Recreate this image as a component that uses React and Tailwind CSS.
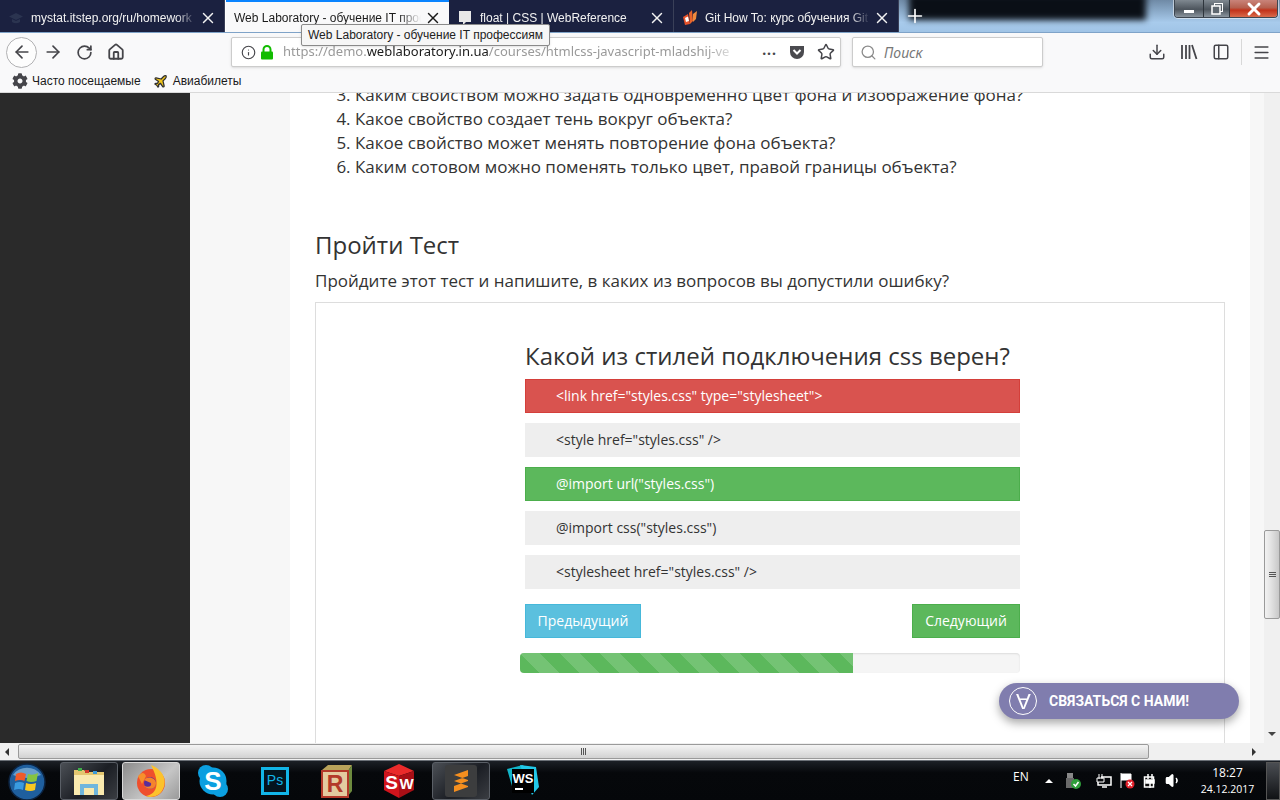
import React from 'react';
import {
  ArrowLeft, ArrowRight, RotateCw, Home, Info, X, Plus, Search, Download,
  PanelLeft, Menu, Star, Plane, Volume1,
} from 'lucide-react';
import { FaCog } from 'react-icons/fa';

const tabs = [
  { title: 'mystat.itstep.org/ru/homework', icon: 'cap' },
  { title: 'Web Laboratory - обучение IT профессиям', active: true },
  { title: 'float | CSS | WebReference', icon: 'bubble' },
  { title: 'Git How To: курс обучения Git', icon: 'git' },
];

const questions = [
  'Каким свойством можно задать одновременно цвет фона и изображение фона?',
  'Какое свойство создает тень вокруг объекта?',
  'Какое свойство может менять повторение фона объекта?',
  'Каким сотовом можно поменять только цвет, правой границы объекта?',
];

const answers = [
  { text: '<link href="styles.css" type="stylesheet">', cls: 'bg-[#d9534f] border-[#d43f3a] text-white' },
  { text: '<style href="styles.css" />', cls: 'bg-[#eeeeee] border-[#eeeeee] text-[#333]' },
  { text: '@import url("styles.css")', cls: 'bg-[#5cb85c] border-[#4cae4c] text-white' },
  { text: '@import css("styles.css")', cls: 'bg-[#eeeeee] border-[#eeeeee] text-[#333]' },
  { text: '<stylesheet href="styles.css" />', cls: 'bg-[#eeeeee] border-[#eeeeee] text-[#333]' },
];

const TabIcon = ({ type }) => {
  if (type === 'cap') {
    return (
      <svg width="16" height="16" viewBox="0 0 16 16" className="shrink-0">
        <path d="M8 3 L15 6.500 L8 10 L1 6.500 Z M4 9 V12 Q8 14.500 12 12 V9 L8 11 Z" fill="#2b3450" />
      </svg>
    );
  }
  if (type === 'bubble') {
    return (
      <svg width="16" height="16" viewBox="0 0 16 16" className="shrink-0">
        <path d="M2 1 H14 V12 H9 L6 15 V12 H2 Z" fill="#e8e8e8" />
      </svg>
    );
  }
  if (type === 'git') {
    return (
      <svg width="16" height="18" viewBox="0 0 16 18" className="shrink-0">
        <path d="M1 8 L6 5 L8 15 L3 16 Z" fill="#e8532b" />
        <path d="M3 9 L6 7.500 L7 12 L4 13 Z" fill="#fff" />
        <path d="M7 4 L10 1 L11 12 L8 15 Z" fill="#e8632b" />
        <path d="M11 5 L15 2 L14 10 L11 13 Z" fill="#f08a3c" />
      </svg>
    );
  }
  return null;
};

const Tab = ({ tab }) => (
  <div
    className={
      tab.active
        ? 'w-[223px] h-[32px] flex items-center pl-[8px] pr-[7px] pt-[1px] bg-[#f9f9fa] border-t-2 border-[#0a84ff] text-[#1a1a1a]'
        : 'w-[225px] h-[32px] flex items-center pl-[8px] pr-[7px] pt-[3px] bg-[#1b2140] border-r border-[#3a4058] text-[#f2f2f2]'
    }
  >
    {tab.icon && <TabIcon type={tab.icon} />}
    <span className={tab.icon ? 'ml-[7px] flex-1 overflow-hidden whitespace-nowrap text-[12px] [mask-image:linear-gradient(90deg,#000_88%,transparent)]' : 'flex-1 overflow-hidden whitespace-nowrap text-[12px] [mask-image:linear-gradient(90deg,#000_88%,transparent)]'}>
      {tab.title}
    </span>
    <X size={18} strokeWidth={1.900} className="ml-[3px] shrink-0" />
  </div>
);

const WindowControls = () => (
  <div className="absolute right-[2px] top-0 flex h-[18px] w-[104px] overflow-hidden rounded-b-[4px] border border-t-0 border-[#3d4650] shadow-[0_0_0_1px_rgba(255,255,255,0.5)]">
    <div className="flex w-[28px] items-end justify-center bg-[linear-gradient(180deg,#7f8890,#4d555d_55%,#8a949d)] pb-[4px]">
      <div className="h-[3px] w-[10px] bg-white" />
    </div>
    <div className="flex w-[27px] items-center justify-center border-x border-[#2e353c] bg-[linear-gradient(180deg,#7f8890,#4d555d_55%,#8a949d)]">
      <svg width="12" height="12" viewBox="0 0 12 12">
        <rect x="3.500" y="0.500" width="8" height="8" fill="none" stroke="#fff" />
        <rect x="1" y="3" width="8" height="8" fill="#5f6870" stroke="#fff" strokeWidth="1.500" />
      </svg>
    </div>
    <div className="flex flex-1 items-center justify-center bg-[linear-gradient(180deg,#c9847a,#b5604f_45%,#c2321a_60%,#d96a4a)]">
      <X size={20} strokeWidth={3.500} className="text-white" />
    </div>
  </div>
);

const TabBar = () => (
  <div className="flex h-[33px] border-b border-[#7fa3c8] font-['Liberation_Sans',sans-serif]">
    <div className="flex w-[226px]"><Tab tab={tabs[0]} /></div>
    <Tab tab={tabs[1]} />
    <Tab tab={tabs[2]} />
    <Tab tab={tabs[3]} />
    <div className="relative flex-1 overflow-hidden bg-[linear-gradient(180deg,#6f8aa6,#a8cbec_70%,#a0c4e6)]">
      <div className="absolute -top-[6px] left-[10px] right-[134px] h-[26px] bg-[#0a0f16] blur-[3px]" />
      <Plus size={22} strokeWidth={1.800} className="absolute left-[5px] top-[5px] text-white" />
      <WindowControls />
    </div>
  </div>
);

const NavBar = () => (
  <div className="flex h-[37px] items-center bg-[#f9f9fa] pl-[6px] pt-[1px] text-[#45454a]">
    <div className="flex h-[31px] w-[31px] items-center justify-center rounded-full border border-[#b1b1b3] bg-[#fdfdfd]">
      <ArrowLeft size={20} strokeWidth={2} />
    </div>
    <ArrowRight size={20} strokeWidth={2} className="ml-[6px]" />
    <RotateCw size={17} strokeWidth={2.400} className="ml-[13px]" />
    <Home size={18} strokeWidth={2.400} className="ml-[14px]" />

    <div className="ml-[106px] flex h-[30px] w-[610px] items-center rounded-[2px] border border-[#ccc] bg-white pl-[9px] pr-[5px] shadow-sm">
      <Info size={15} strokeWidth={1.800} />
      <svg width="14" height="15" viewBox="0 0 14 15" className="ml-[4px] shrink-0">
        <rect x="1" y="6.500" width="12" height="8" rx="1" fill="#12bc00" />
        <path d="M3.500 7 V4.500 A3.500 3.500 0 0 1 10.500 4.500 V7" fill="none" stroke="#12bc00" strokeWidth="2" />
      </svg>
      <div className="ml-[9px] w-[209px] flex-1 overflow-hidden whitespace-nowrap text-[13px] text-[#9a9a9a] [mask-image:linear-gradient(90deg,#000_92%,transparent)]">
        https://demo.<span className="text-[#1a1a1a]">weblaboratory.in.ua</span>/courses/htmlcss-javascript-mladshij-ve
      </div>
      <span className="mb-[6px] ml-[20px] text-[14px] font-bold tracking-[1px]">...</span>
      <svg width="16" height="16" viewBox="0 0 16 16" className="ml-[12px]">
        <path d="M1 2 H15 V8 A7 7 0 0 1 1 8 Z" fill="#4a4a4f" />
        <path d="M4.500 6 L8 9.500 L11.500 6" fill="none" stroke="#fff" strokeWidth="2" />
      </svg>
      <Star size={18} strokeWidth={2} className="ml-[12px]" />
    </div>

    <div className="ml-[11px] flex h-[30px] w-[191px] items-center rounded-[2px] border border-[#ccc] bg-white pl-[7px] shadow-sm">
      <Search size={17} strokeWidth={1.800} className="text-[#8a8a8a]" />
      <span className="ml-[7px] text-[14px] italic text-[#777]">Поиск</span>
    </div>

    <Download size={18} strokeWidth={2} className="ml-[105px]" />
    <svg width="18" height="16" viewBox="0 0 18 16" className="ml-[14px]">
      <path d="M2 1 V15 M6 1 V15 M9.500 1 V15 M12 1 L16.500 15" stroke="#45454a" strokeWidth="1.800" fill="none" />
    </svg>
    <PanelLeft size={18} strokeWidth={2} className="ml-[14px]" />
    <div className="ml-[11px] h-[26px] w-px bg-[#d8d8d8]" />
    <Menu size={19} strokeWidth={2} className="ml-[10px]" />
  </div>
);

const BookmarksBar = () => (
  <div className="flex h-[23px] items-center border-b border-[#d9d9d9] bg-[#f9f9fa] pl-[12px] font-['Liberation_Sans',sans-serif] text-[12px] text-[#1a1a1a]">
    <FaCog size={16} className="text-[#45454a]" />
    <span className="ml-[4px]">Часто посещаемые</span>
    <Plane size={15} strokeWidth={2} className="ml-[12px] fill-[#f0c419] text-[#2f2f2f]" />
    <span className="ml-[5px]">Авиабилеты</span>
  </div>
);

const Quiz = () => (
  <div className="mt-[9px] h-[500px] border border-[#dddddd] pl-[209px] pr-[204px] pt-[35px]">
    <h3 className="text-[24px] leading-[36px] text-[#333]">Какой из стилей подключения css верен?</h3>
    <div className="mt-[5px] flex flex-col gap-[10px]">
      {answers.map((a) => (
        <div key={a.text} className={`h-[34px] border pl-[30px] text-[14px] leading-[32px] ${a.cls}`}>{a.text}</div>
      ))}
    </div>
    <div className="mt-[15px] flex justify-between">
      <div className="flex h-[34px] w-[116px] items-center justify-center border border-[#46b8da] bg-[#5bc0de] pb-[1px] text-[14px] text-white">Предыдущий</div>
      <div className="flex h-[34px] w-[108px] items-center justify-center border border-[#4cae4c] bg-[#5cb85c] pb-[1px] text-[14px] text-white">Следующий</div>
    </div>
    <div className="-ml-[5px] mt-[15px] h-[20px] w-[500px] overflow-hidden rounded-[4px] bg-[#f5f5f5] shadow-[inset_0_1px_2px_rgba(0,0,0,0.1)]">
      <div className="h-full w-[333px] bg-[#5cb85c] bg-[linear-gradient(45deg,rgba(255,255,255,.15)_25%,transparent_25%,transparent_50%,rgba(255,255,255,.15)_50%,rgba(255,255,255,.15)_75%,transparent_75%,transparent)] bg-[length:40px_40px]" />
    </div>
  </div>
);

const VScroll = () => (
  <div className="flex w-[16px] shrink-0 flex-col bg-[#f0f0f0]">
    <div className="h-[437px]" />
    <div className="flex h-[89px] flex-col items-center justify-center gap-[1px] rounded-[2px] border border-[#9a9a9a] bg-[linear-gradient(90deg,#f2f2f2,#e4e4e4_40%,#c8c8c8)]">
      <div className="h-px w-[7px] bg-[#555]" />
      <div className="h-px w-[7px] bg-[#555]" />
      <div className="h-px w-[7px] bg-[#555]" />
    </div>
    <div className="flex-1" />
    <div className="mb-[7px] ml-[4px] h-0 w-0 border-x-[4px] border-t-[4px] border-x-transparent border-t-[#444]" />
  </div>
);

const Page = () => (
  <div className="flex h-[650px] overflow-hidden font-['Open_Sans',sans-serif]">
    <div className="w-[190px] shrink-0 bg-[#2a2a2a]" />
    <div className="w-[100px] shrink-0 bg-[#f7f7f7]" />
    <div className="w-[960px] shrink-0 bg-white px-[25px] text-[#333]">
      <ol start={3} className="-mt-[10px] list-decimal pl-[40px] text-[17px] leading-[24px]">
        {questions.map((q) => <li key={q}>{q}</li>)}
      </ol>
      <h2 className="mt-[49px] text-[24px] leading-[34px]">Пройти Тест</h2>
      <p className="mt-[7px] text-[17px] leading-[24px]">Пройдите этот тест и напишите, в каких из вопросов вы допустили ошибку?</p>
      <Quiz />
    </div>
    <div className="w-[14px] shrink-0 bg-[#f7f7f7]" />
    <VScroll />
  </div>
);

const HScroll = () => (
  <div className="flex h-[17px] items-center bg-[#f0f0f0]">
    <div className="ml-[5px] h-0 w-0 border-y-[4px] border-r-[4px] border-y-transparent border-r-[#333]" />
    <div className="ml-[9px] flex h-[15px] w-[1131px] items-center justify-center gap-[1px] rounded-[2px] border border-[#9a9a9a] bg-[linear-gradient(180deg,#f4f4f4,#d2d2d2)]">
      <div className="h-[7px] w-px bg-[#555]" />
      <div className="h-[7px] w-px bg-[#555]" />
      <div className="h-[7px] w-px bg-[#555]" />
    </div>
    <div className="ml-[103px] h-0 w-0 border-y-[4px] border-l-[4px] border-y-transparent border-l-[#333]" />
  </div>
);

const TaskIcon = ({ children, boxed, active }) => (
  <div
    className={
      active
        ? 'flex h-[38px] w-[58px] items-center justify-center rounded-[3px] border border-[#d8d8d8] bg-[linear-gradient(135deg,#8b8b8b,#c6c6c6_60%,#9a9a9a)]'
        : boxed
          ? 'flex h-[38px] w-[58px] items-center justify-center rounded-[3px] border border-[#5a5f66] bg-[linear-gradient(135deg,#4b4f55,#1b1e24_55%,#3a3d42)]'
          : 'flex h-[38px] w-[58px] items-center justify-center'
    }
  >
    {children}
  </div>
);

const Tray = () => (
  <div className="ml-[461px] flex flex-1 items-center text-white">
    <span className="mb-[7px] text-[12px]">EN</span>
    <div className="ml-[16px] h-0 w-0 border-x-[4px] border-b-[4px] border-x-transparent border-b-white" />
    <svg width="18" height="18" viewBox="0 0 18 18" className="ml-[11px]">
      <rect x="3" y="1" width="6" height="5" fill="#888" />
      <rect x="2" y="6" width="8" height="10" fill="#6a6a6a" />
      <circle cx="12" cy="12" r="5" fill="#2f9e3a" />
      <path d="M9.500 12 L11.500 14 L14.500 10" stroke="#fff" strokeWidth="1.500" fill="none" />
    </svg>
    <svg width="16" height="16" viewBox="0 0 16 16" className="ml-[14px]">
      <path d="M3 1 V6 M6 1 V6 M1 5 H8 V9 H1 Z" stroke="#fff" fill="none" />
      <path d="M5 4 H15 V12 H2 V9 M6 14 H11" stroke="#fff" strokeWidth="1.500" fill="none" />
    </svg>
    <svg width="16" height="16" viewBox="0 0 16 16" className="ml-[7px]">
      <path d="M2 0 V15 M2 1 H12 V7 H2" stroke="#fff" fill="#fff" />
      <circle cx="11" cy="11" r="4.500" fill="#e2212b" />
      <path d="M9 9 L13 13 M13 9 L9 13" stroke="#fff" strokeWidth="1.200" />
    </svg>
    <svg width="14" height="16" viewBox="0 0 14 16" className="ml-[8px]">
      <rect x="1.500" y="4" width="9" height="10" fill="#111" stroke="#fff" strokeWidth="1.500" />
      <path d="M5 1 V6 M9 1 V6 M3 7 H11 V10 H3 Z M7 10 V15" stroke="#fff" strokeWidth="1.500" fill="#fff" />
    </svg>
    <Volume1 size={17} className="ml-[8px] fill-white text-white" />
    <div className="ml-[19px] text-center text-[10.5px] leading-[17px]">
      <div className="text-[12px]">18:27</div>
      <div>24.12.2017</div>
    </div>
    <div className="ml-auto h-[38px] w-[14px] border border-[#555] bg-[linear-gradient(180deg,#4a4d52,#101215)]" />
  </div>
);

const Taskbar = () => (
  <div className="flex h-[40px] items-center border-t border-[#6b7077] bg-[linear-gradient(180deg,#1c2026,#06080b_30%,#05070a)] font-['Open_Sans',sans-serif]">
    <svg width="40" height="40" viewBox="0 0 40 40" className="ml-[7px] shrink-0">
      <circle cx="20" cy="21" r="18" fill="#1f5f9e" stroke="#0c2340" strokeWidth="1.500" />
      <path d="M6 14 A17 17 0 0 1 34 14 Q20 20 6 14 Z" fill="#9cc9ea" opacity="0.6" />
      <path d="M9 13 Q14 10 19 13 L17.500 20 Q13 18 8 20 Z" fill="#ee5a2a" />
      <path d="M21 13 Q26 15 31 12 L29.500 20 Q24 22 19.500 20 Z" fill="#86c440" />
      <path d="M8 22 Q13 20 17 22 L16 29 Q12 27 7 29 Z" fill="#3a9be0" />
      <path d="M19 22 Q24 24 29 22 L28 29 Q23 31 18 29 Z" fill="#f8c820" />
    </svg>

    <div className="ml-[13px] flex gap-[4px]">
      <TaskIcon boxed>
        <svg width="36" height="34" viewBox="0 0 36 34">
          <path d="M3 6 H13 L15 8 H33 V31 H3 Z" fill="#e3c66f" />
          <rect x="3" y="11" width="30" height="20" fill="#f9e9ae" />
          <rect x="7" y="4" width="4" height="3" fill="#3fae49" />
          <rect x="14" y="6" width="4" height="3" fill="#d33a2c" />
          <rect x="22" y="7" width="4" height="3" fill="#3a9ad9" />
          <path d="M9 31 V20 H27 V31 H23 V24 H13 V31 Z" fill="#6fb6dd" />
        </svg>
      </TaskIcon>
      <TaskIcon active>
        <svg width="34" height="34" viewBox="0 0 34 34">
          <circle cx="17" cy="19" r="14" fill="#ef4f2c" />
          <path d="M17 1 C30 6 34 18 28 27 C24 33 16 34 12 32 C24 30 26 18 17 1 Z" fill="#fcc22c" />
          <path d="M4 12 C8 8 10 8 12 12 L8 20 Z" fill="#f7902c" />
          <circle cx="16" cy="19" r="6" fill="#5a2d9a" />
          <path d="M10 16 C14 11 22 14 22 19 C22 25 15 27 10 22 C15 24 18 22 17 19 Z" fill="#f5842c" />
        </svg>
      </TaskIcon>
      <TaskIcon>
        <svg width="32" height="34" viewBox="0 0 32 34">
          <circle cx="9" cy="9" r="8" fill="#0b9fe0" />
          <circle cx="23" cy="25" r="8" fill="#0b9fe0" />
          <circle cx="16" cy="17" r="13.500" fill="#0b9fe0" />
          <text x="16" y="26" textAnchor="middle" fontFamily="Liberation Sans" fontWeight="700" fontSize="26" fill="#fff">S</text>
        </svg>
      </TaskIcon>
      <TaskIcon>
        <div className="flex h-[28px] w-[28px] items-center justify-center border-[3px] border-[#12b5e8] bg-[#04141e] font-['Liberation_Sans',sans-serif] text-[14px] text-[#12b5e8]">Ps</div>
      </TaskIcon>
      <TaskIcon>
        <svg width="34" height="36" viewBox="0 0 34 36">
          <path d="M2 7 L8 2 H32 L28 8 Z" fill="#b8a25a" />
          <path d="M28 8 L32 2 V28 L27 34 Z" fill="#6d8a3e" />
          <rect x="2" y="8" width="26" height="26" fill="#e3cba0" stroke="#b3392a" strokeWidth="2" />
          <text x="15" y="29" textAnchor="middle" fontFamily="Liberation Sans" fontWeight="700" fontSize="23" fill="#b3392a">R</text>
        </svg>
      </TaskIcon>
      <TaskIcon>
        <svg width="34" height="36" viewBox="0 0 34 36">
          <path d="M17 1 L32 8 L17 13 L2 8 Z" fill="#ea2a2a" />
          <path d="M2 8 L17 13 V35 L2 27 Z" fill="#d0141c" />
          <path d="M17 13 L32 8 V27 L17 35 Z" fill="#a80f16" />
          <text x="9.500" y="26" textAnchor="middle" fontFamily="Liberation Sans" fontWeight="700" fontSize="19" fill="#fff">S</text>
          <text x="24.500" y="26" textAnchor="middle" fontFamily="Liberation Sans" fontWeight="700" fontSize="15" fill="#fff">W</text>
        </svg>
      </TaskIcon>
      <TaskIcon boxed>
        <div className="flex h-[32px] w-[32px] items-center justify-center rounded-[3px] bg-[#3c3d3e]">
          <svg width="18" height="24" viewBox="0 0 18 24">
            <path d="M16 1 V7 L2 12 V6 Z M2 12 L16 17 V11 L2 6 Z M16 12 V18 L2 23 V17 Z" fill="#f58f1f" />
          </svg>
        </div>
      </TaskIcon>
      <TaskIcon>
        <svg width="34" height="36" viewBox="0 0 34 36">
          <path d="M1 6 L17 2 L22 10 L8 30 Z" fill="#12b5c8" />
          <path d="M14 2 L30 4 L33 24 L26 32 Z" fill="#22c8e8" />
          <rect x="6" y="6" width="22" height="24" fill="#000" />
          <text x="17" y="20" textAnchor="middle" fontFamily="Liberation Sans" fontWeight="700" fontSize="13" fill="#fff">WS</text>
          <rect x="9" y="25" width="8" height="2" fill="#fff" />
        </svg>
      </TaskIcon>
    </div>

    <Tray />
  </div>
);

export default function App() {
  return (
    <div className="relative h-[800px] w-[1280px] overflow-hidden bg-white font-['Noto_Sans',sans-serif]">
      <TabBar />
      <NavBar />
      <BookmarksBar />
      <Page />
      <HScroll />
      <Taskbar />

      {/* tooltip */}
      <div className="absolute left-[301px] top-[24px] rounded-[2px] border border-[#8a8a8a] bg-[#f6f6f6] px-[6px] font-['Liberation_Sans',sans-serif] text-[12px] leading-[20px] text-[#222] shadow-sm">
        Web Laboratory - обучение IT профессиям
      </div>

      {/* chat */}
      <div className="absolute left-[999px] top-[683px] flex h-[36px] w-[240px] items-center rounded-full bg-[#807dae] pl-[10px] shadow-[0_4px_10px_rgba(0,0,0,0.35)]">
        <div className="flex h-[28px] w-[28px] items-center justify-center rounded-full border border-white">
          <span className="rotate-180 font-['Liberation_Sans',sans-serif] text-[22px] leading-none text-white">A</span>
        </div>
        <span className="ml-[12px] font-['Roboto',sans-serif] text-[14px] font-bold text-white">СВЯЗАТЬСЯ С НАМИ!</span>
      </div>
    </div>
  );
}
